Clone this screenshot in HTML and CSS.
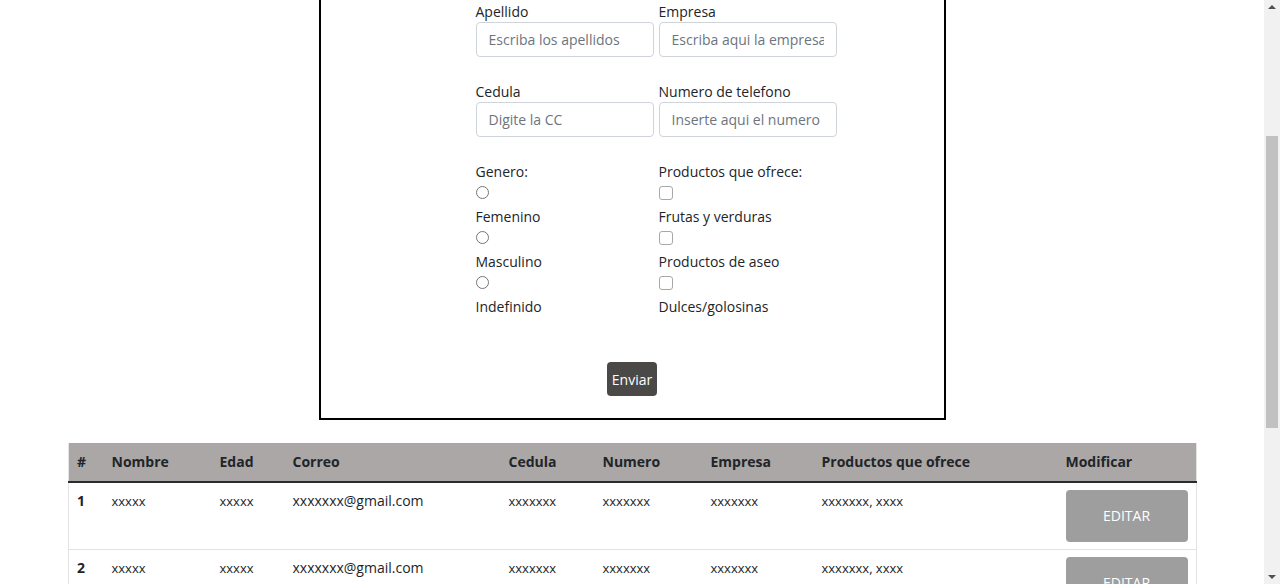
FILE: index.html
```html
<!DOCTYPE html>
<html lang="es">
<head>
<meta charset="utf-8">
<title>Proveedores</title>
<link rel="stylesheet" href="styles.css">
</head>
<body>
<div class="viewport">
  <main class="page">
    <form class="form-box">
      <div class="grid">
        <div class="field">
          <label class="lbl">Apellido</label>
          <input class="control" type="text" placeholder="Escriba los apellidos">
        </div>
        <div class="field">
          <label class="lbl">Empresa</label>
          <input class="control" type="text" placeholder="Escriba aqui la empresa">
        </div>
        <div class="field">
          <label class="lbl">Cedula</label>
          <input class="control" type="text" placeholder="Digite la CC">
        </div>
        <div class="field">
          <label class="lbl">Numero de telefono</label>
          <input class="control" type="text" placeholder="Inserte aqui el numero">
        </div>
        <div class="choices">
          <div class="lbl">Genero:</div>
          <span class="radio"></span>
          <div class="lbl">Femenino</div>
          <span class="radio"></span>
          <div class="lbl">Masculino</div>
          <span class="radio"></span>
          <div class="lbl">Indefinido</div>
        </div>
        <div class="choices">
          <div class="lbl">Productos que ofrece:</div>
          <span class="check"></span>
          <div class="lbl">Frutas y verduras</div>
          <span class="check"></span>
          <div class="lbl">Productos de aseo</div>
          <span class="check"></span>
          <div class="lbl">Dulces/golosinas</div>
        </div>
      </div>
      <div class="actions">
        <button class="btn-send" type="button">Enviar</button>
      </div>
    </form>

    <table class="data">
      <colgroup>
        <col class="w-id"><col class="w-nom"><col class="w-edad"><col class="w-correo"><col class="w-ced"><col class="w-num"><col class="w-emp"><col class="w-prod"><col class="w-mod">
      </colgroup>
      <thead>
        <tr>
          <th>#</th><th>Nombre</th><th>Edad</th><th>Correo</th><th>Cedula</th><th>Numero</th><th>Empresa</th><th>Productos que ofrece</th><th>Modificar</th>
        </tr>
      </thead>
      <tbody>
        <tr>
          <th>1</th><td>xxxxx</td><td>xxxxx</td><td class="mail">xxxxxxx@gmail.com</td><td>xxxxxxx</td><td>xxxxxxx</td><td>xxxxxxx</td><td>xxxxxxx, xxxx</td><td><button class="btn-edit" type="button">EDITAR</button></td>
        </tr>
        <tr>
          <th>2</th><td>xxxxx</td><td>xxxxx</td><td class="mail">xxxxxxx@gmail.com</td><td>xxxxxxx</td><td>xxxxxxx</td><td>xxxxxxx</td><td>xxxxxxx, xxxx</td><td><button class="btn-edit" type="button">EDITAR</button></td>
        </tr>
      </tbody>
    </table>
  </main>
  <div class="scrollbar">
    <span class="arrow up"></span>
    <span class="thumb"></span>
    <span class="arrow down"></span>
  </div>
</div>
</body>
</html>
```
FILE: styles.css
```css
* { box-sizing: border-box; }
html, body { margin: 0; padding: 0; height: 100%; overflow: hidden; }
body {
  font-family: "Segoe UI", "Open Sans", "Noto Sans", sans-serif;
  font-size: 14px;
  color: #212529;
  background: #fff;
}
.viewport { display: flex; height: 584px; width: 1280px; }
.page { flex: 1; overflow: hidden; }

.form-box {
  width: 627px;
  margin: -20px auto 0;
  border: 2px solid #000;
  padding: 19px 0 22px 155px;
}
.grid {
  display: grid;
  grid-template-columns: 178px 178px;
  column-gap: 5px;
}
.field { display: flex; flex-direction: column; margin-bottom: 24px; }
.lbl { display: block; line-height: 21px; height: 21px; font-size: 14px; white-space: nowrap; }
.control {
  height: 35px;
  width: 178px;
  border: 1px solid #ced4da;
  border-radius: 4px;
  padding: 0 12px;
  font: inherit;
  font-size: 14px;
  color: #495057;
}
.control::placeholder { color: #6c757d; opacity: 1; }
.choices { display: flex; flex-direction: column; align-items: flex-start; }
.radio {
  display: block; width: 13px; height: 13px; border: 1px solid #767676;
  border-radius: 50%; margin: 4px 0 7px 0; background: #fff;
}
.check {
  display: block; width: 14px; height: 14px; border: 1px solid #a8a8a8;
  border-radius: 3px; margin: 4px 0 6px 0; background: #fff;
}
.actions { display: flex; justify-content: center; margin-top: 45px; margin-left: -155px; }
.btn-send {
  width: 50px; height: 34px; border: 0; border-radius: 4px;
  background: #4a4947; color: #fff; font: inherit; font-size: 14px; padding: 0;
}

.data {
  width: 1128px;
  margin: 23px 0 0 68px;
  border-collapse: collapse;
  table-layout: fixed;
  border: 1px solid #e3e3e3;
  border-top: 0;
}
.w-id { width: 35px; } .w-nom { width: 108px; } .w-edad { width: 73px; }
.w-correo { width: 216px; } .w-ced { width: 94px; } .w-num { width: 108px; }
.w-emp { width: 111px; } .w-prod { width: 244px; } .w-mod { width: 139px; }
.data thead th {
  background: #aba7a6;
  font-weight: 700;
  font-size: 14px;
  text-align: left;
  padding: 8px 9px 8px 8px;
  line-height: 22px;
  height: 38px;
  border-bottom: 2px solid #2b2b2b;
}
.data tbody th, .data tbody td {
  text-align: left;
  vertical-align: top;
  padding: 7px 9px 7px 8px;
  line-height: 22px;
  font-size: 13px;
  border-bottom: 1px solid #e3e3e3;
}
.data tbody th { font-weight: 700; font-size: 14px; }
.data tbody td.mail { font-size: 14px; }
.btn-edit {
  width: 122px; height: 52px; border: 0; border-radius: 4px;
  background: #9e9e9e; color: #fff; font: inherit; font-size: 14px; padding: 0;
}

.scrollbar {
  width: 16px; background: #f1f1f1;
  display: flex; flex-direction: column; align-items: center;
}
.arrow { display: block; width: 0; height: 0; border-left: 4px solid transparent; border-right: 4px solid transparent; }
.arrow.up { border-bottom: 4px solid #505050; margin-top: 5px; }
.arrow.down { border-top: 4px solid #505050; margin-top: auto; margin-bottom: 5px; }
.thumb { display: block; width: 12px; height: 292px; background: #c1c1c1; margin-top: 127px; }
```
